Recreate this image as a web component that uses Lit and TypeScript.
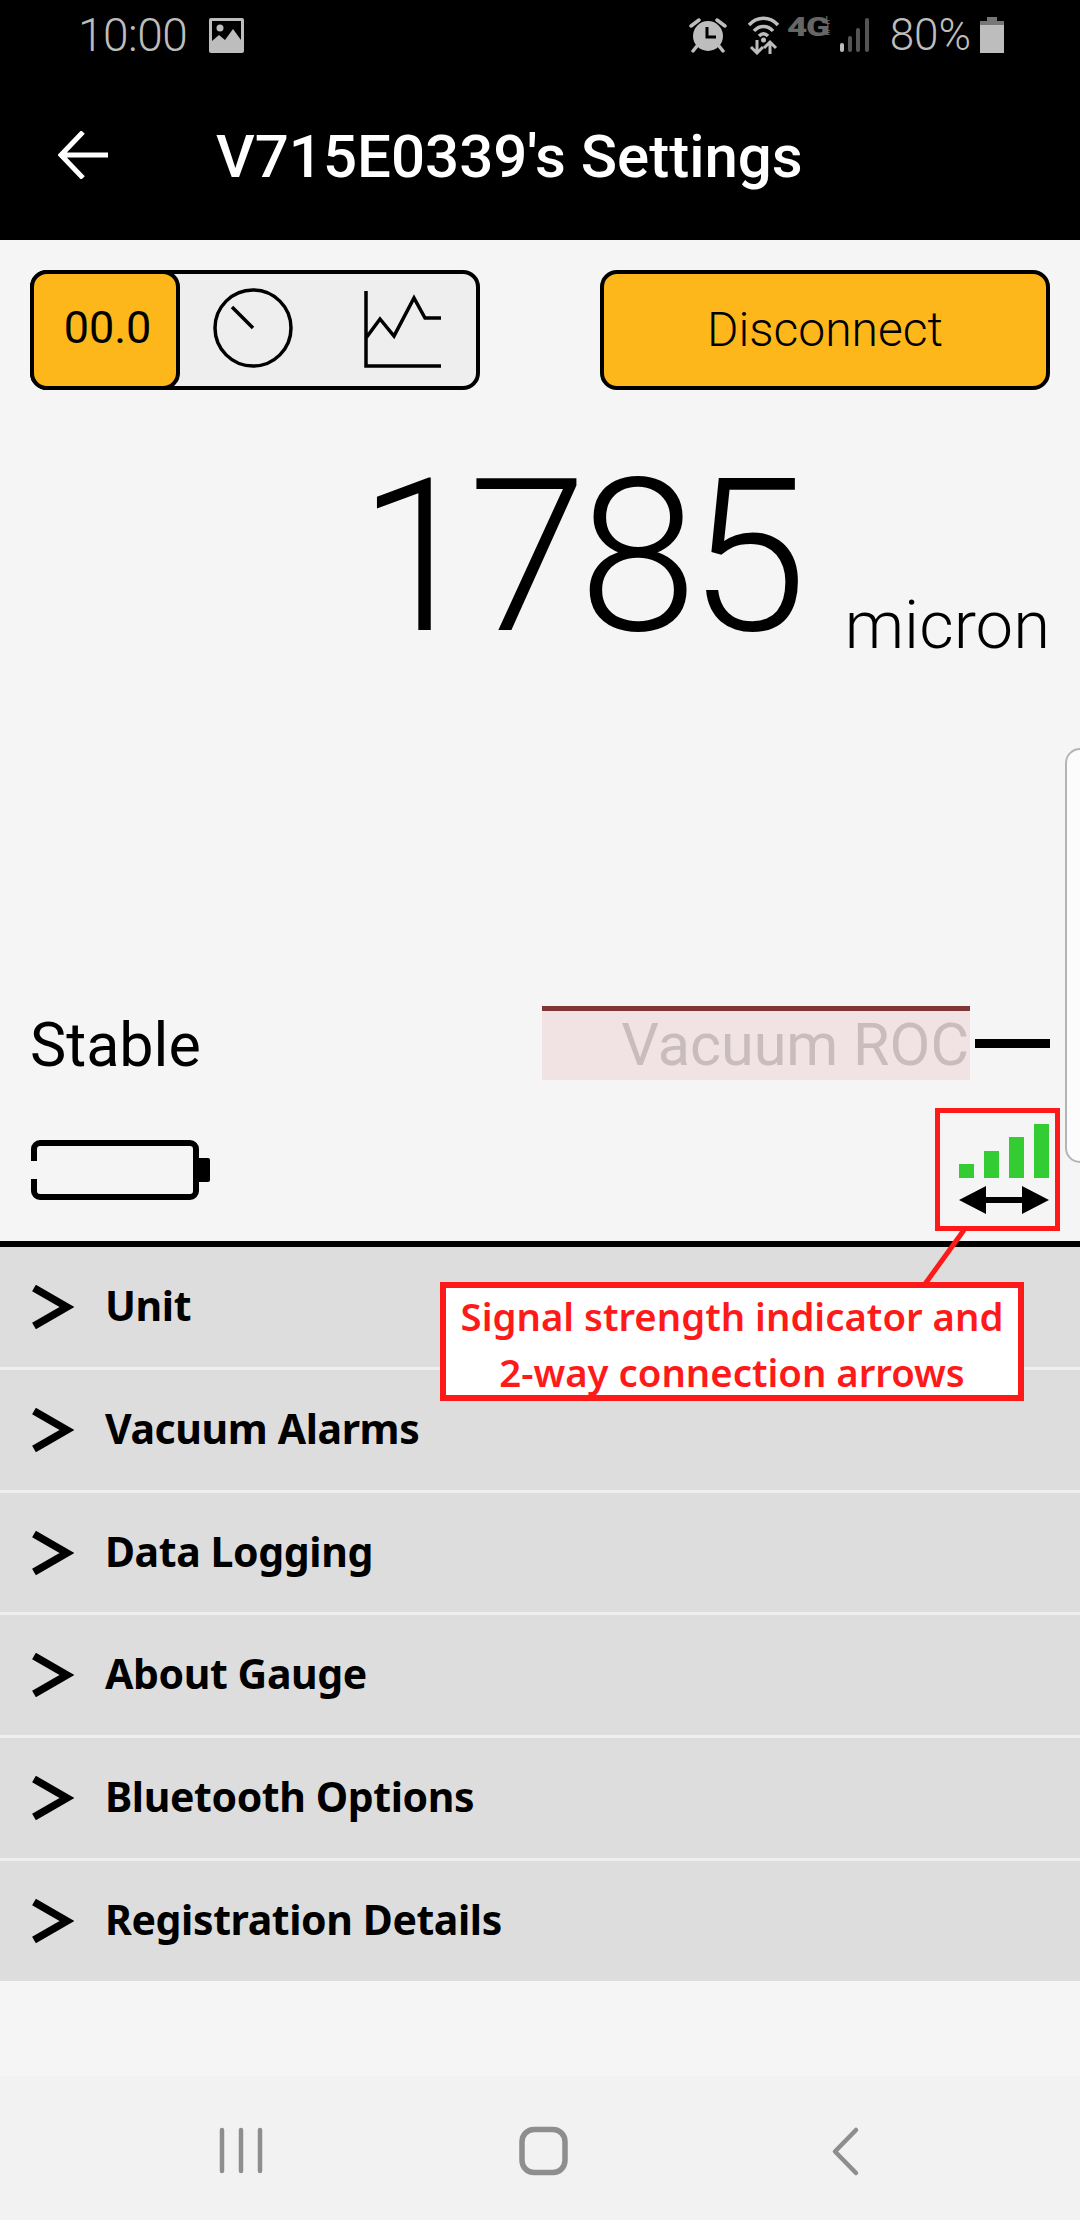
import { LitElement, html, css } from "lit";
import { customElement } from "lit/decorators.js";

const MENU = ["Unit", "Vacuum Alarms", "Data Logging", "About Gauge", "Bluetooth Options", "Registration Details"];

@customElement("app-root")
export class AppRoot extends LitElement {
  static styles = css`
    :host { display: block; position: relative; width: 1080px; height: 2220px; overflow: hidden; background: #f5f5f5; font-family: Roboto, sans-serif; color: #000; }
    .page { display: flex; flex-direction: column; height: 2220px; }
    .top { background: #000; height: 240px; display: flex; flex-direction: column; flex: none; }
    .status { height: 70px; display: flex; align-items: center; padding: 0 76px 0 78px; color: #bdbdbd; }
    .time { font-size: 46px; font-weight: 300; letter-spacing: -0.5px; line-height: 72px; }
    .status svg { display: block; flex: none; }
    .img { margin-left: 22px; }
    .spacer { flex: 1; }
    .g4 { width: 45px; height: 24px; margin: 0 0 16px 8px; display: flex; align-items: flex-start; color: #666; font-weight: 900; line-height: 24px; }
    .g4 b { font-size: 26px; font-weight: 900; letter-spacing: -1px; transform: scaleX(1.35); transform-origin: left; width: 36px; flex: none; }
    .g4 i { font-style: normal; font-size: 8px; line-height: 7px; width: 8px; margin-left: 1px; text-align: center; font-weight: 700; white-space: pre; }
    .pct { font-size: 44px; font-weight: 300; margin: 0 9px 0 20px; line-height: 72px; }
    .bar { flex: 1; display: flex; align-items: center; padding-left: 58px; }
    .title { color: #fff; font-size: 60px; font-weight: 500; margin: 3px 0 0 108px; white-space: nowrap; }

    .main { height: 1001px; flex: none; display: flex; flex-direction: column; padding: 30px 30px 0 30px; box-sizing: border-box; }
    .controls { display: flex; justify-content: space-between; height: 120px; flex: none; }
    .toggle { width: 450px; display: flex; box-sizing: border-box; border: 4px solid #000; border-radius: 17px; background: #eee; }
    .toggle .on { width: 150px; flex: none; margin: -4px 0 -4px -4px; box-sizing: border-box; border: 4px solid #000; border-radius: 17px; background: #fdb71a; display: flex; align-items: center; justify-content: center; font-size: 45px; padding: 0 0 5px 5px; }
    .toggle svg { display: block; width: 150px; height: 112px; flex: none; }
    .disc { width: 450px; box-sizing: border-box; border: 4px solid #000; border-radius: 17px; background: #fdb71a; display: flex; align-items: center; justify-content: center; font-size: 48px; font-weight: 300; padding-bottom: 2px; }
    .reading { display: flex; justify-content: flex-end; align-items: flex-end; height: 240px; flex: none; margin-top: 47px; }
    .value { font-size: 214px; font-weight: 300; line-height: 240px; letter-spacing: -8.600px; }
    .unit { font-size: 67px; font-weight: 300; line-height: 80px; margin: 0 0 12px 46px; }
    .stat { display: flex; align-items: flex-start; height: 74px; margin-top: auto; flex: none; }
    .stable { font-size: 61px; line-height: 74px; width: 512px; margin-top: 2px; }
    .roc { width: 428px; height: 74px; box-sizing: border-box; background: #f1e3e3; border-top: 5px solid #7f3535; text-align: right; color: #c8bcbc; font-size: 59.300px; line-height: 68px; padding-right: 1px; }
    .dash { width: 75px; height: 9px; background: #000; margin: 33px 0 0 5px; }
    .info { display: flex; justify-content: space-between; align-items: flex-start; margin-top: 43px; height: 118px; flex: none; }
    .info svg { display: block; }
    .batt { margin-top: 17px; }
    .rule { height: 6px; background: #000; flex: none; }
    .menu { flex: none; height: 734px; display: flex; flex-direction: column; background: #ddd; }
    .row { flex: 1; display: flex; align-items: center; padding-left: 32px; border-bottom: 3px solid #efefef; font-family: "Noto Sans", sans-serif; font-weight: 700; font-size: 41px; letter-spacing: -0.4px; color: #000; }
    .row:last-child { border-bottom: 0; }
    .row svg { display: block; margin-right: 31px; flex: none; }
    .row span { margin-bottom: 4px; }
    .rest { flex: 1; }
    .nav { height: 144px; flex: none; background: #f2f2f2; display: flex; align-items: flex-start; }
    .nav svg { display: block; }

    .edge { position: absolute; left: 1065px; top: 748px; width: 30px; height: 415px; box-sizing: border-box; border: 2px solid #b5b5b5; border-radius: 16px; background: #fcfcfc; }
    .mark { position: absolute; left: 935px; top: 1108px; width: 125px; height: 123px; box-sizing: border-box; border: 5px solid #ff1a1a; }
    .lead { position: absolute; left: 920px; top: 1228px; }
    .note { position: absolute; left: 440px; top: 1282px; width: 584px; height: 119px; box-sizing: border-box; border: 6px solid #ff1a1a; background: #fff; color: #ff1a1a; font-family: "Noto Sans", sans-serif; font-weight: 600; font-size: 38.300px; line-height: 56px; text-align: center; padding-bottom: 4px; }
  `;

  render() {
    return html`<div class="page">
      <div class="top">
        <div class="status">
          <span class="time">10:00</span>
          <svg class="img" width="35" height="35" viewBox="0 0 35 35"><path fill="#bdbdbd" fill-rule="evenodd" d="M2 0h31a2 2 0 0 1 2 2v31a2 2 0 0 1-2 2H2a2 2 0 0 1-2-2V2a2 2 0 0 1 2-2zM3 3v20l7-6 6 5 8-11 8 11V3z"/><circle cx="11" cy="10" r="3.5" fill="#bdbdbd"/></svg>
          <span class="spacer"></span>
          <svg width="38" height="36" viewBox="0 0 38 36"><g stroke="#bdbdbd" stroke-width="3.5" fill="none" stroke-linecap="round"><path d="M2 9l8-6M36 9l-8-6M8 29l-4 5M30 29l4 5"/></g><circle cx="19" cy="19" r="15" fill="#bdbdbd"/><path d="M18 10v10h9" stroke="#000" stroke-width="3" fill="none"/></svg>
          <svg style="margin-left:21px" width="31" height="39" viewBox="0 0 31 39"><g fill="none" stroke="#bdbdbd" stroke-width="3.5"><path d="M1 9c8-9 21-9 29 0"/><path d="M6 15c5-6 14-6 19 0"/><path d="M11 20c3-3 6-3 9 0"/></g><circle cx="15.500" cy="24" r="2.500" fill="#bdbdbd"/><g fill="none" stroke="#bdbdbd" stroke-width="3"><path d="M9 24v13M3 31l6 6 6-6"/><path d="M22 38V26M16 32l6-6 6 6"/></g></svg>
          <div class="g4"><b>4G</b><i>L
T
E</i></div>
          <svg style="margin-left:8px" width="30" height="34" viewBox="0 0 30 34"><g stroke-linecap="round" stroke-width="4" fill="none"><path d="M2 32v-5" stroke="#bdbdbd"/><path d="M10 32V20M18 32V12M27 32V2" stroke="#555"/></g></svg>
          <span class="pct">80%</span>
          <svg width="24" height="36" viewBox="0 0 24 36"><path fill="#bdbdbd" d="M0 8h24v28H0z"/><path fill="#777" d="M7 0h10v4h7v4H0V4h7z"/></svg>
        </div>
        <div class="bar">
          <svg width="50" height="48" viewBox="0 0 50 48"><path d="M50 24H4M25 1L3 24l22 23" fill="none" stroke="#fff" stroke-width="5"/></svg>
          <span class="title">V715E0339's Settings</span>
        </div>
      </div>

      <div class="main">
        <div class="controls">
          <div class="toggle">
            <div class="on">00.0</div>
            <svg viewBox="180 274 150 112"><circle cx="253" cy="328" r="38" fill="none" stroke="#000" stroke-width="3.500"/><path d="M232 307l21 21" stroke="#000" stroke-width="3.500"/></svg>
            <svg viewBox="330 274 150 112"><path d="M366 291v75h75M366 338l14-19 14 17 20-38 11 20h16" fill="none" stroke="#000" stroke-width="3.500"/></svg>
          </div>
          <div class="disc">Disconnect</div>
        </div>
        <div class="reading"><span class="value">1785</span><span class="unit">micron</span></div>
        <div class="stat">
          <span class="stable">Stable</span>
          <div class="roc">Vacuum ROC</div>
          <div class="dash"></div>
        </div>
        <div class="info">
          <svg class="batt" width="180" height="60" viewBox="0 0 180 60"><path d="M4 21V9a6 6 0 0 1 6-6h150a6 6 0 0 1 6 6v42a6 6 0 0 1-6 6H10a6 6 0 0 1-6-6V39" fill="none" stroke="#000" stroke-width="6"/><path d="M167 18h11a2 2 0 0 1 2 2v20a2 2 0 0 1-2 2h-11z" fill="#000"/></svg>
          <svg width="92" height="92" viewBox="0 0 92 92"><g fill="#3c3"><rect x="1" y="41" width="15" height="14"/><rect x="26" y="28" width="15" height="27"/><rect x="51" y="14" width="15" height="41"/><rect x="76" y="1" width="15" height="54"/></g><path d="M1 77l27-14v11h36V63l27 14-27 14V80H28v11z" fill="#000"/></svg>
        </div>
      </div>
      <div class="rule"></div>
      <div class="menu">
        ${MENU.map((m) => html`<div class="row">
          <svg width="42" height="44" viewBox="0 0 42 44"><path d="M2 3l33 19L2 41" fill="none" stroke="#000" stroke-width="7.500"/></svg>
          <span>${m}</span>
        </div>`)}
      </div>
      <div class="rest"></div>
      <div class="nav">
        <svg width="1080" height="144" viewBox="0 2076 1080 144"><g stroke="#8e8e8e" fill="none" stroke-linecap="round" stroke-linejoin="round"><path stroke-width="4.500" d="M222 2130v41M241 2130v41M260 2130v41"/><rect x="522" y="2129.500" width="43" height="43" rx="12" stroke-width="5.500"/><path stroke-width="4.500" d="M856 2130l-21 21.500 21 21.500"/></g></svg>
      </div>
    </div>
    <div class="edge"></div>
    <div class="mark"></div>
    <svg class="lead" width="50" height="60" viewBox="0 0 50 60"><path d="M44 2L5 56" stroke="#ff1a1a" stroke-width="5" fill="none"/></svg>
    <div class="note">Signal strength indicator and<br />2-way connection arrows</div>`;
  }
}
